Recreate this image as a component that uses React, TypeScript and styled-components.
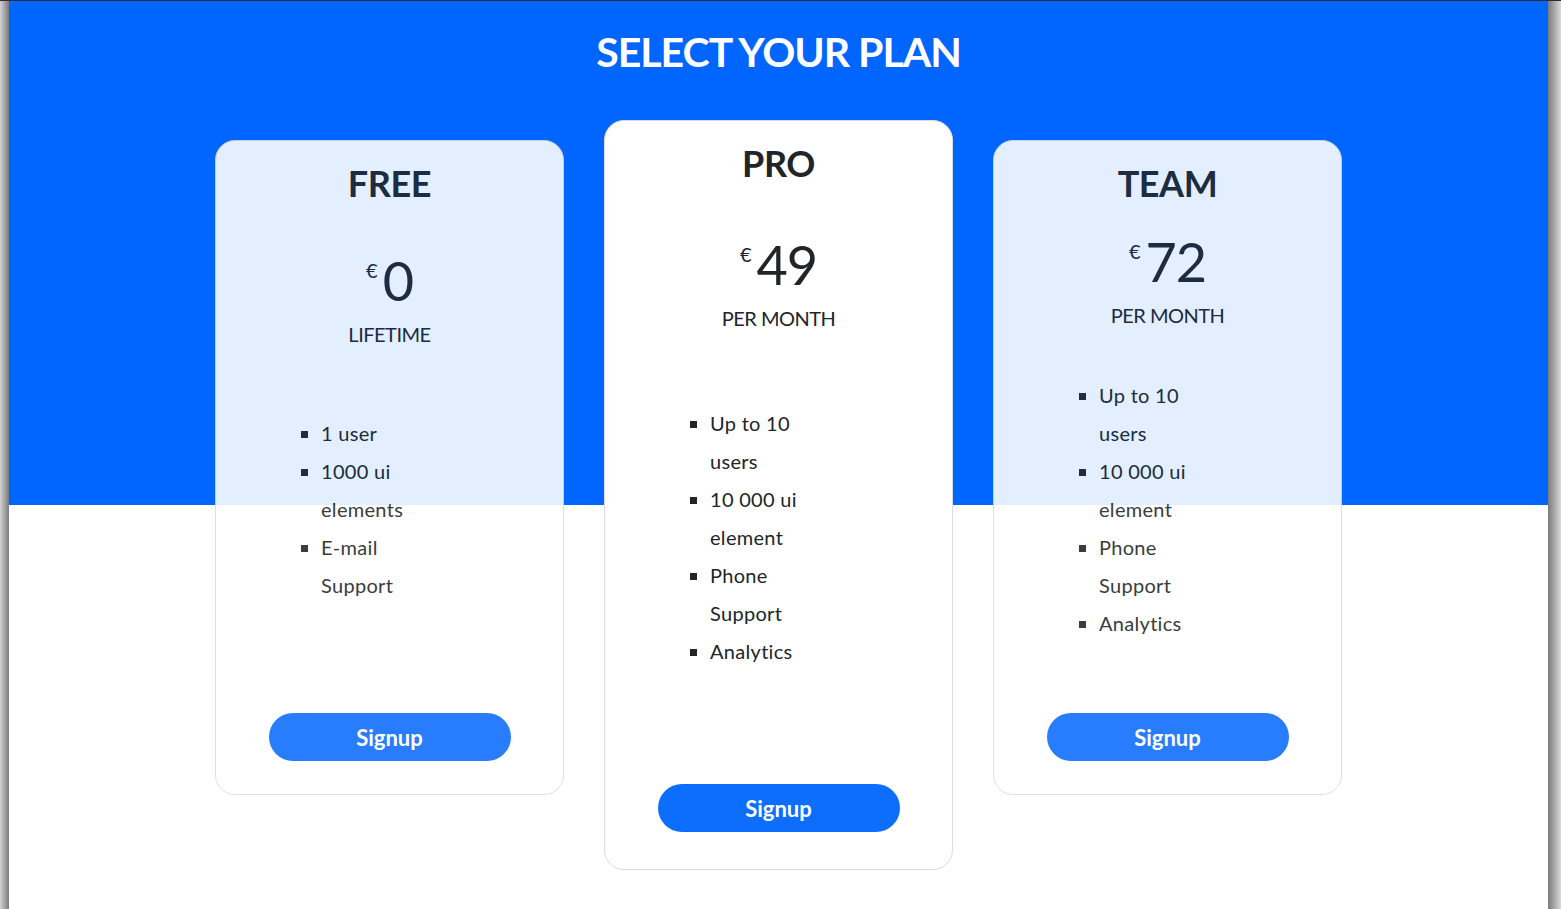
import styled, { createGlobalStyle } from "styled-components";

const GlobalStyle = createGlobalStyle`
    html, body {
        margin: 0;
        padding: 0;
    }
    body {
        font-family: Lato, "Noto Sans", sans-serif;
        color: #212529;
    }
    * {
        box-sizing: border-box;
    }
`;

const Frame = styled.div`
    min-height: 100vh;
    padding: 0 13px 0 9px;
    border-top: 1px solid #2e2e2e;
    background: linear-gradient(
        to right,
        #d2d2d2 0,
        #7a7a7a 9px,
        #7a7a7a calc(100% - 13px),
        #dadada 100%
    );
`;

const Page = styled.main`
    min-height: calc(100vh - 1px);
    padding-top: 26px;
    background: linear-gradient(#0066ff 0, #0066ff 504px, #ffffff 504px);
`;

const Heading = styled.h1`
    margin: 0;
    text-align: center;
    color: #ffffff;
    font-size: 41px;
    line-height: 50px;
    font-weight: 700;
    letter-spacing: -1px;
`;

const CardRow = styled.div`
    display: flex;
    justify-content: center;
    align-items: flex-start;
    gap: 40px;
    margin-top: 43px;
`;

const Card = styled.section<{ $featured?: boolean }>`
    display: flex;
    flex-direction: column;
    width: 349px;
    height: ${(p) => (p.$featured ? "750px" : "655px")};
    margin-top: ${(p) => (p.$featured ? "0" : "20px")};
    padding: 20px 0 ${(p) => (p.$featured ? "37px" : "33px")};
    background: #ffffff;
    border: 1px solid #dcdcdc;
    border-radius: 20px;
    opacity: ${(p) => (p.$featured ? 1 : 0.89)};
`;

const PlanName = styled.h2`
    margin: 0;
    text-align: center;
    font-size: 36px;
    line-height: 44px;
    font-weight: 700;
    letter-spacing: -0.4px;
`;

const PriceBlock = styled.div<{ $gap: number }>`
    display: flex;
    flex-direction: column;
    align-items: center;
    margin-top: ${(p) => p.$gap}px;
`;

const PriceRow = styled.div`
    display: flex;
    align-items: flex-start;
`;

const Currency = styled.span`
    font-size: 20px;
    line-height: 20px;
    margin-top: 9px;
    margin-right: 5px;
`;

const Amount = styled.span`
    font-size: 54px;
    line-height: 60px;
    font-weight: 400;
    letter-spacing: -1px;
`;

const Period = styled.div`
    margin-top: 10px;
    font-size: 20px;
    line-height: 26px;
    letter-spacing: -0.5px;
    text-transform: uppercase;
`;

const Features = styled.ul<{ $gap: number }>`
    align-self: flex-start;
    box-sizing: content-box;
    width: 110px;
    margin: ${(p) => p.$gap}px 0 0;
    padding: 0 0 0 105px;
    list-style: square;
    font-size: 20px;
    line-height: 38px;
    letter-spacing: 0.3px;
`;

const Feature = styled.li`
    padding-left: 0;
`;

const SignupButton = styled.button`
    align-self: center;
    margin-top: auto;
    width: 242px;
    height: 48px;
    border: none;
    border-radius: 24px;
    background: #0d6efd;
    color: #ffffff;
    font-family: inherit;
    font-size: 22px;
    font-weight: 700;
    cursor: pointer;
`;

interface Plan {
    name: string;
    price: string;
    period: string;
    features: string[];
    featured?: boolean;
    priceGap: number;
    listGap: number;
}

const plans: Plan[] = [
    {
        name: "FREE",
        price: "0",
        period: "Lifetime",
        features: ["1 user", "1000 ui elements", "E-mail Support"],
        priceGap: 46,
        listGap: 67,
    },
    {
        name: "PRO",
        price: "49",
        period: "Per Month",
        features: ["Up to 10 users", "10 000 ui element", "Phone Support", "Analytics"],
        featured: true,
        priceGap: 50,
        listGap: 73,
    },
    {
        name: "TEAM",
        price: "72",
        period: "Per Month",
        features: ["Up to 10 users", "10 000 ui element", "Phone Support", "Analytics"],
        priceGap: 27,
        listGap: 48,
    },
];

function App() {
    return (
        <>
            <GlobalStyle />
            <Frame>
                <Page>
                    <Heading>SELECT YOUR PLAN</Heading>
                    <CardRow>
                        {plans.map((plan) => (
                            <Card key={plan.name} $featured={plan.featured}>
                                <PlanName>{plan.name}</PlanName>
                                <PriceBlock $gap={plan.priceGap}>
                                    <PriceRow>
                                        <Currency>€</Currency>
                                        <Amount>{plan.price}</Amount>
                                    </PriceRow>
                                    <Period>{plan.period}</Period>
                                </PriceBlock>
                                <Features $gap={plan.listGap}>
                                    {plan.features.map((f) => (
                                        <Feature key={f}>{f}</Feature>
                                    ))}
                                </Features>
                                <SignupButton>Signup</SignupButton>
                            </Card>
                        ))}
                    </CardRow>
                </Page>
            </Frame>
        </>
    );
}

export default App;
